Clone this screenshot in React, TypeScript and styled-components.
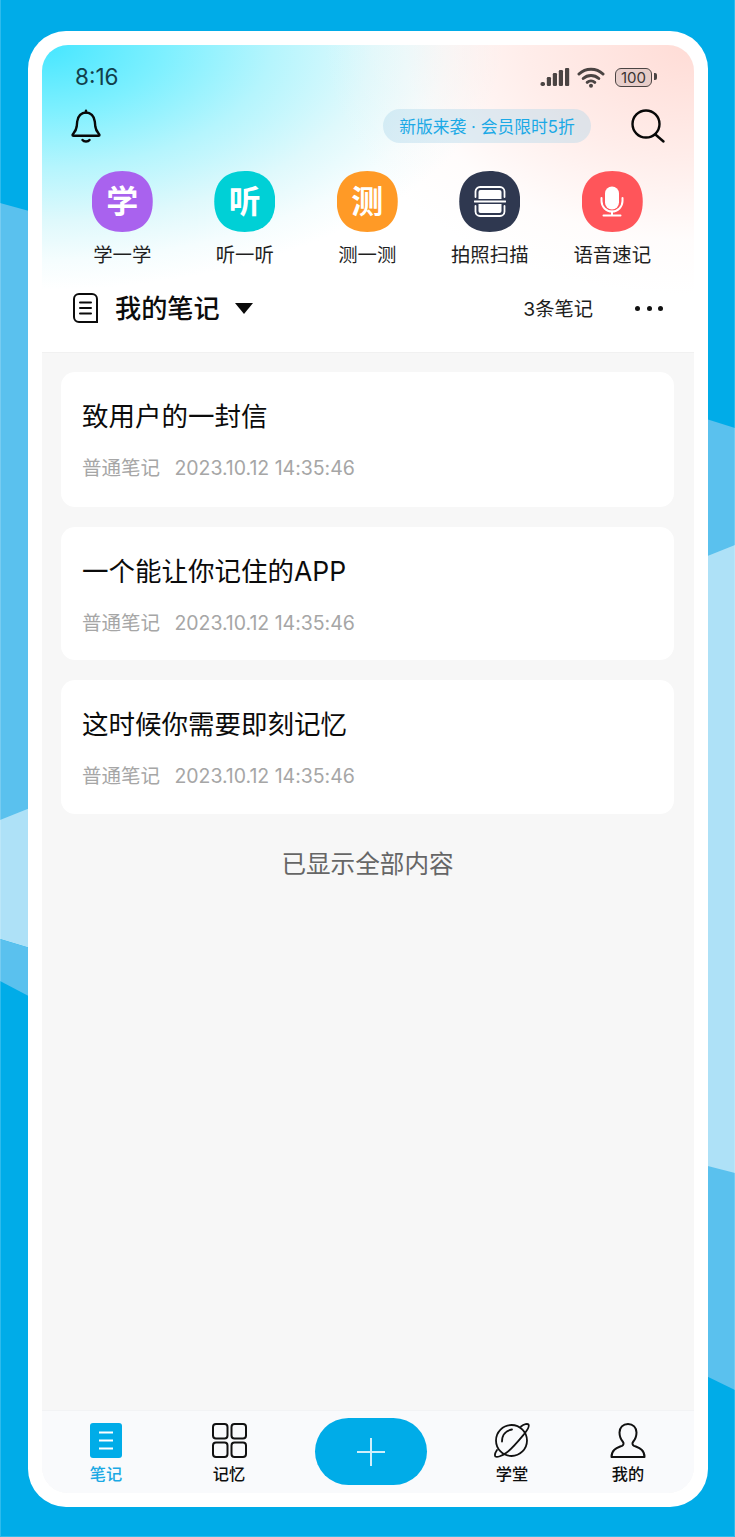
import React from "react";
import styled, { createGlobalStyle } from "styled-components";

const GlobalStyle = createGlobalStyle`
  * {
    box-sizing: border-box;
  }
  html,
  body {
    margin: 0;
    padding: 0;
    background: #00ace8;
    font-family: Inter, "Noto Sans CJK SC", sans-serif;
  }
`;

const Page = styled.div`
  position: relative;
  width: 735px;
  height: 1537px;
  padding: 31px 27px 30px 28px;
  overflow: hidden;
  background: #00ace8;
`;

const Backdrop = styled.svg`
  position: absolute;
  inset: 0;
`;

const Phone = styled.div`
  position: relative;
  height: 100%;
  padding: 14px;
  border-radius: 38px;
  background: #fff;
`;

const Screen = styled.div`
  display: flex;
  flex-direction: column;
  height: 100%;
  overflow: hidden;
  border-radius: 26px;
  background: #f7f7f7;
`;

const Header = styled.header`
  height: 308px;
  padding: 0 29px;
  flex-shrink: 0;
  border-bottom: 1px solid #f1f1f1;
  background:
    radial-gradient(ellipse 370px 250px at 100% 0, #ffdcd6 0%, rgba(255, 225, 220, 0.6) 45%, rgba(255, 240, 238, 0.2) 78%, rgba(255, 255, 255, 0) 100%),
    radial-gradient(ellipse 460px 245px at 0 0, #45e6ff 0%, #7ef0ff 27%, #b5f5fd 50%, #dff9fc 72%, #f5fdfe 88%, rgba(255, 255, 255, 0) 100%),
    #fff;
`;

const StatusBar = styled.div`
  display: flex;
  align-items: center;
  justify-content: space-between;
  height: 32px;
  margin: 16px 1px 0 4px;
`;

const Clock = styled.span`
  font-size: 22.5px;
  line-height: 30px;
  color: #123f4c;
`;

const StatusIcons = styled.div`
  display: flex;
  align-items: center;
  gap: 7px;
`;

const Battery = styled.div`
  position: relative;
  display: flex;
  align-items: center;
  justify-content: center;
  width: 37px;
  height: 19px;
  margin: 0 12px 0 3px;
  border: 1.5px solid #4b4443;
  border-radius: 6px;
  font-family: Inter, sans-serif;
  font-size: 15px;
  line-height: 1;
  color: #3a3433;
  background: rgba(90, 70, 70, 0.14);

  &::after {
    content: "";
    position: absolute;
    right: -5.5px;
    top: 4.5px;
    width: 2.5px;
    height: 7px;
    border-radius: 0 2px 2px 0;
    background: #4b4443;
  }
`;

const TopRow = styled.div`
  display: flex;
  align-items: center;
  justify-content: space-between;
  height: 40px;
  margin-top: 13px;
`;

const Promo = styled.div`
  display: flex;
  align-items: center;
  justify-content: center;
  width: 208px;
  height: 34px;
  margin-left: auto;
  margin-right: 39px;
  border-radius: 17px;
  font-family: Inter, "Noto Sans CJK SC", sans-serif;
  font-size: 16.8px;
  white-space: pre;
  color: #1ba9e6;
  background: rgba(165, 212, 232, 0.36);
`;

const SearchIcon = styled.svg`
  margin-right: -1px;
`;

const Shortcuts = styled.div`
  display: grid;
  grid-template-columns: repeat(5, 122.5px);
  margin: 25px 0 0 -10px;
`;

const Shortcut = styled.div`
  display: flex;
  flex-direction: column;
  align-items: center;
`;

const Tile = styled.div<{ $bg: string }>`
  display: flex;
  align-items: center;
  justify-content: center;
  width: 61px;
  height: 61px;
  clip-path: path("M30.5 0C50 0 61 11 61 30.5C61 50 50 61 30.5 61C11 61 0 50 0 30.5C0 11 11 0 30.5 0Z");
  background: ${(p) => p.$bg};
`;

const TileGlyph = styled.span`
  margin-top: -5px;
  font-family: "Noto Sans CJK SC", sans-serif;
  font-size: 32px;
  font-weight: 700;
  line-height: 1;
  color: #fff;
`;

const ShortcutLabel = styled.span`
  margin-top: 8px;
  font-family: "Noto Sans CJK SC", sans-serif;
  font-size: 19.4px;
  line-height: 28px;
  white-space: nowrap;
  color: #1f1f1f;
`;

const NotesBar = styled.div`
  display: flex;
  align-items: center;
  height: 40px;
  margin-top: 20px;
  padding-left: 2px;
`;

const NotesTitle = styled.h1`
  margin: 0 15px 2px 17px;
  font-family: "Noto Sans CJK SC", sans-serif;
  font-size: 26.2px;
  font-weight: 500;
  line-height: 38px;
  color: #0c0c0c;
`;

const Caret = styled.span`
  width: 0;
  height: 0;
  border-left: 9px solid transparent;
  border-right: 9px solid transparent;
  border-top: 11px solid #0a0a0a;
`;

const NotesCount = styled.span`
  margin-left: auto;
  margin-right: 42px;
  font-size: 19.3px;
  color: #1c1c1c;
`;

const Dots = styled.div`
  display: flex;
  gap: 6.5px;
  margin-right: 2px;
`;

const Dot = styled.i`
  width: 5px;
  height: 5px;
  border-radius: 50%;
  background: #111;
`;

const List = styled.main`
  flex: 1;
  padding: 19px 20px 0 19px;
`;

const Card = styled.article<{ $height: number }>`
  height: ${(p) => p.$height}px;
  margin-bottom: 20px;
  padding: 25px 21px 0;
  border-radius: 14px;
  background: #fff;
`;

const CardTitle = styled.h2`
  margin: 0;
  font-family: Inter, "Noto Sans CJK SC", sans-serif;
  font-size: 26.5px;
  font-weight: 400;
  line-height: 38px;
  color: #0b0b0b;
`;

const CardMeta = styled.div`
  display: flex;
  gap: 14.5px;
  margin-top: 19px;
  font-size: 19.5px;
  line-height: 28px;
  letter-spacing: -0.03px;
  color: #a6a6a6;
`;

const EndNote = styled.p`
  margin: 32px 0 0;
  text-align: center;
  font-size: 24.6px;
  line-height: 36px;
  color: #666;
`;

const NavBar = styled.nav`
  display: grid;
  grid-template-columns: 128px 118px 166px 116px 116px;
  align-items: start;
  height: 83px;
  flex-shrink: 0;
  background: #f9fafc;
  border-top: 1px solid #f2f3f5;
`;

const NavItem = styled.div<{ $active?: boolean }>`
  display: flex;
  flex-direction: column;
  align-items: center;
  padding-top: 12px;
  font-family: "Noto Sans CJK SC", sans-serif;
  font-size: 16.2px;
  font-weight: 500;
  line-height: 24px;
  color: ${(p) => (p.$active ? "#1ba9e4" : "#0e0e0e")};
`;

const NavIcon = styled.svg`
  display: block;
  margin-bottom: 3px;
`;

const AddWrap = styled.div`
  display: flex;
  justify-content: center;
  padding-top: 7px;
`;

const AddButton = styled.button`
  display: flex;
  align-items: center;
  justify-content: center;
  width: 112px;
  height: 67px;
  padding: 0;
  border: 0;
  border-radius: 34px;
  background: #00ace8;
`;

const shortcuts = [
  { label: "学一学", bg: "#a962ee", glyph: "学" },
  { label: "听一听", bg: "#00d0d6", glyph: "听" },
  { label: "测一测", bg: "#ff9a26", glyph: "测" },
  { label: "拍照扫描", bg: "#2f3850", icon: "scan" },
  { label: "语音速记", bg: "#ff555a", icon: "mic" },
];

const notes = [
  { title: "致用户的一封信", height: 135 },
  { title: "一个能让你记住的APP", height: 133 },
  { title: "这时候你需要即刻记忆", height: 134 },
];

const ScanGlyph = () => (
  <svg width="32" height="31" viewBox="0 0 32 31" fill="none" stroke="#fff" strokeWidth="1.8" strokeLinecap="round">
    <path d="M1.5 11V5.500a4.500 4.500 0 0 1 4.500-4.500h20a4.500 4.500 0 0 1 4.500 4.500V11" />
    <path d="M1.500 20v5.500A4.500 4.500 0 0 0 6 30h20a4.500 4.500 0 0 0 4.500-4.500V20" />
    <path d="M.5 15.500h31" />
    <path d="M4.500 13V6a2 2 0 0 1 2-2h19a2 2 0 0 1 2 2v7z" fill="#fff" stroke="none" />
    <path d="M4.500 18v7a2 2 0 0 0 2 2h19a2 2 0 0 0 2-2v-7z" fill="#fff" stroke="none" />
  </svg>
);

const MicGlyph = () => (
  <svg width="24" height="31" viewBox="0 0 24 31" fill="none" stroke="#fff" strokeWidth="2" strokeLinecap="round">
    <rect x="5" y="0.5" width="14" height="23" rx="7" fill="#fff" stroke="none" />
    <path d="M1.500 12v3a10.500 10.500 0 0 0 21 0v-3" />
    <path d="M12 25.500v4M3.500 29.500h17" />
  </svg>
);

export default function App() {
  return (
    <>
      <GlobalStyle />
      <Page>
        <Backdrop width="735" height="1537" viewBox="0 0 735 1537">
          <polygon points="0,203 40,214 40,951 0,939" fill="#5ac1ee" />
          <polygon points="0,820 40,804 40,951 0,939" fill="#aee1f7" />
          <polygon points="0,939 40,951 40,1002 0,981" fill="#5ac1ee" />
          <polygon points="700,417 735,428 735,1390 700,1373" fill="#5ac1ee" />
          <polygon points="700,559 735,545 735,1173 700,1164" fill="#aee1f7" />
          <path d="M.5 0V1536.500H734.500V0" fill="none" stroke="#fff" strokeOpacity="0.18" />
        </Backdrop>
        <Phone>
          <Screen>
            <Header>
              <StatusBar>
                <Clock>8:16</Clock>
                <StatusIcons>
                  <svg width="30" height="20" viewBox="0 0 30 20" fill="#4b4443">
                    <rect x="0.5" y="15" width="4.500" height="4" rx="1.800" />
                    <rect x="6.800" y="10" width="4.200" height="9" rx="1.200" />
                    <rect x="12.800" y="6" width="4.200" height="13" rx="1.200" />
                    <rect x="18.800" y="3" width="4.200" height="16" rx="1.200" />
                    <rect x="25" y="1" width="4.200" height="18" rx="1" />
                  </svg>
                  <svg width="28" height="21" viewBox="0 0 28 21" fill="none" stroke="#4b4443" strokeWidth="3" strokeLinecap="round">
                    <path d="M2 7a17.500 17.500 0 0 1 24 0" />
                    <path d="M6.200 11.500a11.500 11.500 0 0 1 15.600 0" />
                    <path d="M10.200 15.300a5.800 5.800 0 0 1 7.600 0" />
                    <circle cx="14" cy="18.800" r="2" fill="#4b4443" stroke="none" />
                  </svg>
                  <Battery>100</Battery>
                </StatusIcons>
              </StatusBar>
              <TopRow>
                <svg width="30" height="34" viewBox="0 0 30 34" fill="none" stroke="#080808" strokeWidth="2.400" strokeLinejoin="round" strokeLinecap="round">
                  <path d="M1.500 26c0-1.500 3.500-3 4.200-8.500l.5-5C6.800 7 10.500 3.500 15 3.500s8.200 3.500 8.800 9l.5 5c.7 5.500 4.200 7 4.200 8.500 0 .5-.5.800-1 .800H2.500c-.5 0-1-.3-1-.800z" />
                  <path d="M15 1.800v1.700" />
                  <path d="M11.500 31c1.500 2 5.500 2 7 0" />
                </svg>
                <Promo>新版来袭 · 会员限时5折</Promo>
                <SearchIcon width="36" height="36" viewBox="0 0 36 36" fill="none" stroke="#080808" strokeWidth="2.400" strokeLinecap="round">
                  <circle cx="16" cy="16" r="13.500" />
                  <path d="M26 27l7.500 6.500" />
                </SearchIcon>
              </TopRow>
              <Shortcuts>
                {shortcuts.map((item) => (
                  <Shortcut key={item.label}>
                    <Tile $bg={item.bg}>
                      {item.glyph && <TileGlyph>{item.glyph}</TileGlyph>}
                      {item.icon === "scan" && <ScanGlyph />}
                      {item.icon === "mic" && <MicGlyph />}
                    </Tile>
                    <ShortcutLabel>{item.label}</ShortcutLabel>
                  </Shortcut>
                ))}
              </Shortcuts>
              <NotesBar>
                <svg width="25" height="30" viewBox="0 0 25 30" fill="none" stroke="#0b0b0b" strokeWidth="2" strokeLinecap="round">
                  <path d="M6 1h13a5 5 0 0 1 5 5v23H6a5 5 0 0 1-5-5V6a5 5 0 0 1 5-5z" />
                  <path d="M7 9.500h11M7 15h11M7 20.500h11" />
                </svg>
                <NotesTitle>我的笔记</NotesTitle>
                <Caret />
                <NotesCount>3条笔记</NotesCount>
                <Dots>
                  <Dot />
                  <Dot />
                  <Dot />
                </Dots>
              </NotesBar>
            </Header>
            <List>
              {notes.map((note) => (
                <Card key={note.title} $height={note.height}>
                  <CardTitle>{note.title}</CardTitle>
                  <CardMeta>
                    <span>普通笔记</span>
                    <span>2023.10.12 14:35:46</span>
                  </CardMeta>
                </Card>
              ))}
              <EndNote>已显示全部内容</EndNote>
            </List>
            <NavBar>
              <NavItem $active>
                <NavIcon width="32" height="35" viewBox="0 0 32 35">
                  <rect width="32" height="35" rx="3" fill="#00ace8" />
                  <path d="M9 9.500h14M9 17.500h14M9 25.500h14" stroke="#fff" strokeWidth="2" />
                </NavIcon>
                笔记
              </NavItem>
              <NavItem>
                <NavIcon width="35" height="35" viewBox="0 0 35 35" fill="none" stroke="#111" strokeWidth="2">
                  <rect x="1" y="1" width="14.500" height="14.500" rx="3" />
                  <rect x="19.500" y="1" width="14.500" height="14.500" rx="3" />
                  <rect x="1" y="19.500" width="14.500" height="14.500" rx="3" />
                  <rect x="19.500" y="19.500" width="14.500" height="14.500" rx="3" />
                </NavIcon>
                记忆
              </NavItem>
              <AddWrap>
                <AddButton aria-label="add">
                  <svg width="30" height="30" viewBox="0 0 30 30" stroke="#cfeffb" strokeWidth="2">
                    <path d="M15 1v28M1 15h28" />
                  </svg>
                </AddButton>
              </AddWrap>
              <NavItem>
                <NavIcon width="36" height="35" viewBox="0 0 36 35" fill="none" stroke="#111" strokeWidth="1.800" strokeLinecap="round">
                  <circle cx="17.500" cy="17.500" r="15.500" />
                  <path d="M27 3.500C30 1 33.500.5 34.500 1.500 35.500 3 34 6 31 10 26 16 18 26 12 30 8 33 3 34.500 1.500 33.500.5 32.500 1 30 3 27" />
                  <path d="M8 18.500C8 12 12 7.500 18 6.500" />
                </NavIcon>
                学堂
              </NavItem>
              <NavItem>
                <NavIcon width="36" height="35" viewBox="0 0 36 35" fill="none" stroke="#111" strokeWidth="2" strokeLinejoin="round">
                  <path d="M18 1c5 0 8.500 3.500 8.500 8.500 0 4-1.800 7.500-3.500 9.500-1 1.200-.6 3 1 3.800 4 1.800 10.500 3 10.500 11.200H1.500c0-8.200 6.500-9.400 10.500-11.200 1.600-.8 2-2.600 1-3.800-1.700-2-3.500-5.500-3.500-9.500C9.500 4.500 13 1 18 1z" />
                </NavIcon>
                我的
              </NavItem>
            </NavBar>
          </Screen>
        </Phone>
      </Page>
    </>
  );
}
